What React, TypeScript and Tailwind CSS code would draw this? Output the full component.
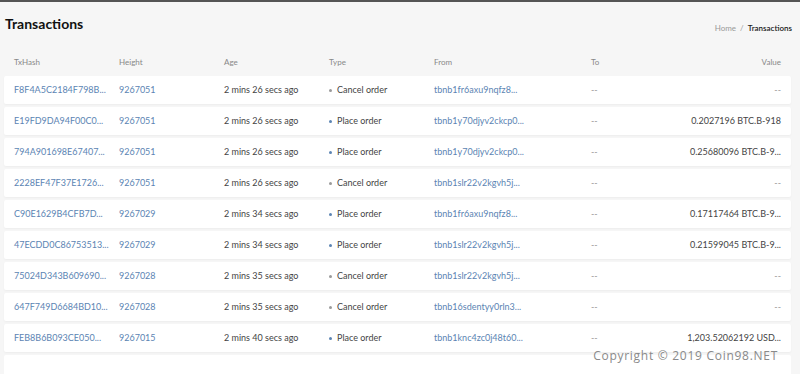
type Tx = {
  hash: string;
  height: string;
  age: string;
  type: "Cancel order" | "Place order";
  from: string;
  value: string;
};

const txs: Tx[] = [
  { hash: "F8F4A5C2184F798B...", height: "9267051", age: "2 mins 26 secs ago", type: "Cancel order", from: "tbnb1fr6axu9nqfz8...", value: "--" },
  { hash: "E19FD9DA94F00C0...", height: "9267051", age: "2 mins 26 secs ago", type: "Place order", from: "tbnb1y70djyv2ckcp0...", value: "0.2027196 BTC.B-918" },
  { hash: "794A901698E67407...", height: "9267051", age: "2 mins 26 secs ago", type: "Place order", from: "tbnb1y70djyv2ckcp0...", value: "0.25680096 BTC.B-9..." },
  { hash: "2228EF47F37E1726...", height: "9267051", age: "2 mins 26 secs ago", type: "Cancel order", from: "tbnb1slr22v2kgvh5j...", value: "--" },
  { hash: "C90E1629B4CFB7D...", height: "9267029", age: "2 mins 34 secs ago", type: "Place order", from: "tbnb1fr6axu9nqfz8...", value: "0.17117464 BTC.B-9..." },
  { hash: "47ECDD0C86753513...", height: "9267029", age: "2 mins 34 secs ago", type: "Place order", from: "tbnb1slr22v2kgvh5j...", value: "0.21599045 BTC.B-9..." },
  { hash: "75024D343B609690...", height: "9267028", age: "2 mins 35 secs ago", type: "Cancel order", from: "tbnb1slr22v2kgvh5j...", value: "--" },
  { hash: "647F749D6684BD10...", height: "9267028", age: "2 mins 35 secs ago", type: "Cancel order", from: "tbnb16sdentyy0rln3...", value: "--" },
  { hash: "FEB8B6B093CE050...", height: "9267015", age: "2 mins 40 secs ago", type: "Place order", from: "tbnb1knc4zc0j48t60...", value: "1,203.52062192 USD..." },
];

const cols = "grid grid-cols-[105px_105px_105px_105px_157px_1fr_auto] items-center";

const Row = ({ tx }: { tx: Tx }) => (
  <li className={`${cols} h-[28px] bg-white rounded-[2px] shadow-[0_1px_2px_rgba(0,0,0,0.04)] pl-[10px] pr-[10px] text-[9px] text-[#444]`}>
    <span className="text-[#5b84b3]">{tx.hash}</span>
    <span className="text-[#5b84b3]">{tx.height}</span>
    <span>{tx.age}</span>
    <span className="flex items-center gap-[5px]">
      <span className={`w-[3px] h-[3px] rounded-full ${tx.type === "Place order" ? "bg-[#5b84b3]" : "bg-[#9a9a9a]"}`} />
      {tx.type}
    </span>
    <span className="text-[#5b84b3]">{tx.from}</span>
    <span className="text-[#999]">--</span>
    <span className={`text-right ${tx.value === "--" ? "text-[#999]" : ""}`}>{tx.value}</span>
  </li>
);

const App = () => {
  return (
    <div className="relative w-[800px] h-[374px] overflow-hidden bg-[#f6f6f6] border-t-2 border-[#555] font-['Lato',sans-serif]">
      <div className="flex items-end justify-between pl-[5px] pr-[8px] pt-[13px]">
        <h1 className="text-[14px] font-bold text-[#111] leading-[18px]">Transactions</h1>
        <div className="text-[8px] text-[#999] leading-none pb-[1px]">
          Home <span className="mx-[2px]">/</span> <span className="text-[#222] font-semibold">Transactions</span>
        </div>
      </div>
      <div className={`${cols} h-[18px] mt-[20px] pl-[14px] pr-[19px] text-[8px] text-[#888]`}>
        <span>TxHash</span>
        <span>Height</span>
        <span>Age</span>
        <span>Type</span>
        <span>From</span>
        <span>To</span>
        <span className="text-right">Value</span>
      </div>
      <ul className="flex flex-col gap-[3px] mt-[5px] pl-[4px] pr-[9px]">
        {txs.map((tx) => (
          <Row key={tx.hash} tx={tx} />
        ))}
        <li className="h-[28px] bg-white rounded-[2px]" />
      </ul>
      <div className="absolute right-[22px] bottom-[9px] text-[12px] tracking-[0.06em] text-[#8a8a8a] font-['Open_Sans',sans-serif]">
        Copyright © 2019 Coin98.NET
      </div>
    </div>
  );
};

export default App;
